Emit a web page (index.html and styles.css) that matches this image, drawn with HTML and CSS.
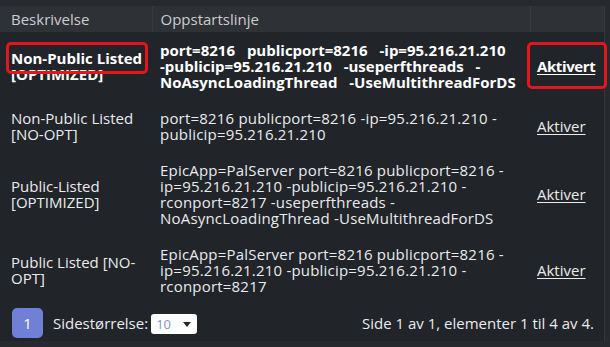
FILE: index.html
```html
<!DOCTYPE html>
<html lang="no">
<head>
<meta charset="utf-8">
<title>Oppstartsprofiler</title>
<link rel="stylesheet" href="styles.css">
</head>
<body>
<div class="panel">
  <table class="grid">
    <colgroup>
      <col class="c-desc">
      <col class="c-cmd">
      <col class="c-act">
    </colgroup>
    <thead>
      <tr>
        <th>Beskrivelse</th>
        <th>Oppstartslinje</th>
        <th></th>
      </tr>
    </thead>
    <tbody>
      <tr class="active">
        <td><span class="mark mark-name">Non-Public Listed</span> [OPTIMIZED]</td>
        <td class="cmd">port=8216 publicport=8216 -ip=95.216.21.210 -publicip=95.216.21.210 -useperfthreads -NoAsyncLoadingThread -UseMultithreadForDS</td>
        <td><a href="#" class="act mark mark-link">Aktivert</a></td>
      </tr>
      <tr>
        <td>Non-Public Listed [NO-OPT]</td>
        <td class="cmd">port=8216 publicport=8216 -ip=95.216.21.210 -publicip=95.216.21.210</td>
        <td><a href="#" class="act">Aktiver</a></td>
      </tr>
      <tr>
        <td>Public-Listed [OPTIMIZED]</td>
        <td class="cmd">EpicApp=PalServer port=8216 publicport=8216 -ip=95.216.21.210 -publicip=95.216.21.210 -rconport=8217 -useperfthreads -NoAsyncLoadingThread -UseMultithreadForDS</td>
        <td><a href="#" class="act">Aktiver</a></td>
      </tr>
      <tr>
        <td>Public Listed [NO-OPT]</td>
        <td class="cmd">EpicApp=PalServer port=8216 publicport=8216 -ip=95.216.21.210 -publicip=95.216.21.210 -rconport=8217</td>
        <td><a href="#" class="act">Aktiver</a></td>
      </tr>
    </tbody>
  </table>
  <div class="pager">
    <button class="page">1</button>
    <label class="size">Sidestørrelse:
      <span class="select"><span class="val">10</span><span class="caret"></span></span>
    </label>
    <span class="info">Side 1 av 1, elementer 1 til 4 av 4.</span>
  </div>
</div>
</body>
</html>
```
FILE: styles.css
```css
html, body {
  margin: 0;
  padding: 0;
}
body {
  background: #26292d;
  font-family: "Open Sans", "Noto Sans", sans-serif;
  font-size: 15px;
  line-height: 16px;
  color: #e9ebee;
  width: 610px;
  height: 347px;
  overflow: hidden;
}
.panel {
  margin-top: 6px;
  width: 604px;
  background: #212428;
  border-right: 1px solid #35393e;
}
.grid {
  width: 604px;
  border-collapse: collapse;
  table-layout: fixed;
}
.c-desc { width: 152px; }
.c-cmd { width: 378px; }
.c-act { width: 74px; }
.grid th {
  background: #2e3135;
  color: #c9cdd2;
  font-weight: normal;
  text-align: left;
  padding: 5px 8px;
  height: 16px;
  border-left: 1px solid #383c41;
}
.grid th:first-child {
  border-left: none;
  padding-left: 11px;
}
.grid td {
  padding: 10px 8px;
  vertical-align: middle;
}
.grid td:first-child {
  padding-left: 11px;
}
.grid td:last-child {
  padding-left: 7px;
}
.grid td.cmd {
  letter-spacing: 0.2px;
}
.active td {
  font-weight: bold;
  color: #ffffff;
}
.grid .active td.cmd {
  letter-spacing: 0;
  word-spacing: 8px;
}
.act {
  color: #e9ebee;
  text-decoration: underline;
  text-underline-offset: 2px;
}
.active .act {
  color: #ffffff;
  letter-spacing: -0.4px;
}
.mark {
  position: relative;
}
.mark-name {
  white-space: nowrap;
}
.mark::after {
  content: "";
  position: absolute;
  border: 3px solid #e3161b;
  border-radius: 5px;
  pointer-events: none;
}
.mark-name::after {
  top: -6px;
  bottom: -6px;
  left: -5px;
  right: -6px;
}
.mark-link::after {
  top: -14px;
  bottom: -13px;
  left: -10px;
  right: -12px;
}
.pager {
  display: flex;
  align-items: center;
  height: 37px;
  padding: 0 10px 0 12px;
}
.page {
  width: 31px;
  height: 30px;
  border: none;
  border-radius: 5px;
  background: #6f80d6;
  color: #ffffff;
  font-family: inherit;
  font-size: 15px;
  padding: 0;
  margin-top: 1px;
}
.size {
  margin-left: 10px;
  display: flex;
  align-items: center;
  gap: 3px;
}
.select {
  display: inline-flex;
  align-items: center;
  justify-content: space-between;
  width: 46px;
  height: 20px;
  box-sizing: border-box;
  padding: 0 6px 0 5px;
  background: #ffffff;
  border-radius: 3px;
  margin-top: 3px;
}
.val {
  color: #8390dc;
  font-size: 13px;
}
.caret {
  width: 0;
  height: 0;
  border-left: 4px solid transparent;
  border-right: 4px solid transparent;
  border-top: 5px solid #1f2933;
}
.info {
  margin-left: auto;
}
```
